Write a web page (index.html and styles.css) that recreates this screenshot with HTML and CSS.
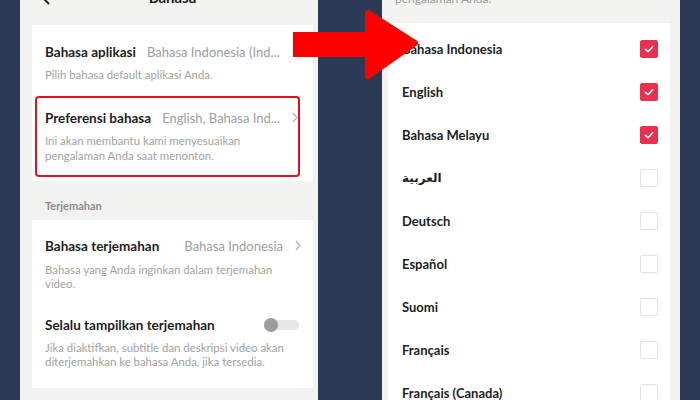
FILE: index.html
```html
<!doctype html>
<html>
<head>
  <link rel="stylesheet" href="styles.css">
</head>
<body>
  <div class="screen">
    <section class="phone phone-left">
      <div class="topbar">
        <svg class="back" width="8" height="14" viewBox="0 0 8 14"><path d="M7 1 L1 7 L7 13" fill="none" stroke="#222" stroke-width="2"/></svg>
        <h2>Bahasa</h2>
      </div>

      <div class="card card-first">
        <div class="item">
          <div class="item-head">
            <span class="label">Bahasa aplikasi</span>
            <span class="value">Bahasa Indonesia (Ind...</span>
            <svg class="chev" width="6" height="11" viewBox="0 0 6 11"><path d="M1 1 L5 5.5 L1 10" fill="none" stroke="#b4b4b4" stroke-width="1.3"/></svg>
          </div>
          <p class="desc">Pilih bahasa default aplikasi Anda.</p>
        </div>
        <div class="item item-marked">
          <div class="item-head">
            <span class="label">Preferensi bahasa</span>
            <span class="value">English, Bahasa Ind...</span>
            <svg class="chev" width="6" height="11" viewBox="0 0 6 11"><path d="M1 1 L5 5.5 L1 10" fill="none" stroke="#b4b4b4" stroke-width="1.3"/></svg>
          </div>
          <p class="desc">Ini akan membantu kami menyesuaikan<br>pengalaman Anda saat menonton.</p>
        </div>
      </div>

      <div class="group-title">Terjemahan</div>

      <div class="card card-second">
        <div class="item">
          <div class="item-head">
            <span class="label">Bahasa terjemahan</span>
            <span class="value value-right">Bahasa Indonesia</span>
            <svg class="chev" width="6" height="11" viewBox="0 0 6 11"><path d="M1 1 L5 5.5 L1 10" fill="none" stroke="#b4b4b4" stroke-width="1.3"/></svg>
          </div>
          <p class="desc">Bahasa yang Anda inginkan dalam terjemahan<br>video.</p>
        </div>
        <div class="item item-toggle">
          <div class="item-head">
            <span class="label">Selalu tampilkan terjemahan</span>
            <span class="switch"><span class="knob"></span></span>
          </div>
          <p class="desc">Jika diaktifkan, subtitle dan deskripsi video akan<br>diterjemahkan ke bahasa Anda, jika tersedia.</p>
        </div>
      </div>
    </section>

    <svg class="arrow" width="140" height="80" viewBox="0 0 140 80">
      <rect x="3" y="24" width="80" height="25" fill="#ff0000"/>
      <polygon points="78,5 125,35 78,68" fill="#ff0000" stroke="#ff0000" stroke-width="6" stroke-linejoin="round"/>
    </svg>

    <section class="phone phone-right">
      <p class="intro">pengalaman Anda.</p>
      <ul class="lang-list">
        <li><span>Bahasa Indonesia</span><span class="box checked"></span></li>
        <li><span>English</span><span class="box checked"></span></li>
        <li><span>Bahasa Melayu</span><span class="box checked"></span></li>
        <li><span class="ar">العربية</span><span class="box"></span></li>
        <li><span>Deutsch</span><span class="box"></span></li>
        <li><span>Español</span><span class="box"></span></li>
        <li><span>Suomi</span><span class="box"></span></li>
        <li><span>Français</span><span class="box"></span></li>
        <li><span>Français (Canada)</span><span class="box"></span></li>
      </ul>
    </section>
  </div>
</body>
</html>
```

FILE: styles.css
```css
* {
  margin: 0;
  padding: 0;
  box-sizing: border-box;
}

body {
  background: #2c3a55;
  font-family: Lato, "DejaVu Sans", sans-serif;
  overflow: hidden;
}

.screen {
  position: relative;
  display: flex;
  gap: 64px;
  padding-left: 20px;
  height: 400px;
}

.phone {
  width: 298px;
  height: 400px;
  background: #f2f3f1;
  overflow: hidden;
}

/* left screen */

.phone-left {
  padding: 0 5px 0 12px;
}

.topbar {
  display: flow-root;
  height: 25px;
  position: relative;
}

.topbar .back {
  position: absolute;
  left: 10px;
  top: -9px;
}

.topbar h2 {
  margin-top: -11px;
  text-align: center;
  font-size: 15px;
  line-height: 16px;
  color: #1a1a1a;
}

.card {
  background: #fff;
}

.card-first {
  padding-bottom: 4px;
}

.card-second {
  padding-bottom: 19px;
}

.item {
  padding: 18px 12px 0 13px;
}

.item-head {
  display: flex;
  align-items: center;
  height: 18px;
  white-space: nowrap;
}

.label {
  font-size: 13.5px;
  font-weight: 700;
  color: #1e1e1e;
}

.value {
  flex: 1;
  margin-left: 11px;
  font-size: 13px;
  color: #9e9e9e;
  overflow: hidden;
}

.value-right {
  text-align: right;
  margin-right: 2px;
}

.chev {
  margin-left: 10px;
  flex: none;
}

.desc {
  margin-top: 7px;
  font-size: 11.4px;
  line-height: 14.5px;
  color: #a2a2a2;
}

.item-marked {
  margin: 13px 13px 0 3px;
  padding: 11px 0 12px 8px;
  border: 2px solid #e0101c;
  border-radius: 4px;
}

.item-marked .desc {
  margin-top: 6px;
  line-height: 15px;
}

.card-second .item {
  padding-top: 17px;
}

.card-second .desc {
  margin-top: 8px;
  line-height: 14px;
}

.card-second .item-toggle {
  padding-top: 25px;
}

.item-toggle .desc {
  margin-top: 7px;
}

.group-title {
  height: 39px;
  padding: 18px 0 0 13px;
  font-size: 11px;
  line-height: 14px;
  font-weight: 700;
  color: #8c8c8c;
}

.switch {
  margin-left: auto;
  margin-right: 2px;
  position: relative;
  width: 35px;
  height: 10px;
  border-radius: 5px;
  background: #e6e6e6;
}

.knob {
  position: absolute;
  left: 0;
  top: -2px;
  width: 14px;
  height: 14px;
  border-radius: 50%;
  background: #9c9c9c;
}

/* arrow over both screens */

.arrow {
  position: absolute;
  left: 290px;
  top: 8px;
}

/* right screen */

.phone-right {
  padding: 0 10px 0 6px;
}

.intro {
  height: 31px;
  margin-top: -8px;
  padding-left: 7px;
  font-size: 12px;
  line-height: 14px;
  color: #9a9a9a;
}

.lang-list {
  list-style: none;
  background: #fff;
  padding: 4px 12px 0 14px;
  height: 400px;
}

.lang-list li {
  display: flex;
  align-items: center;
  justify-content: space-between;
  height: 43px;
  font-size: 13px;
  font-weight: 700;
  color: #1e1e1e;
}

.ar {
  font-family: "DejaVu Sans", sans-serif;
  font-size: 12px;
}

.box {
  width: 18px;
  height: 18px;
  border: 1px solid #e3e3e3;
  border-radius: 2px;
  background: #fff;
}

.box.checked {
  border-color: #e9304f;
  background: #e9304f url("data:image/svg+xml,%3Csvg xmlns='http://www.w3.org/2000/svg' width='18' height='18'%3E%3Cpath d='M5 9.5 L8 12 L13 6.5' fill='none' stroke='white' stroke-width='1.8' stroke-linecap='round' stroke-linejoin='round'/%3E%3C/svg%3E") center/16px no-repeat;
}
```
